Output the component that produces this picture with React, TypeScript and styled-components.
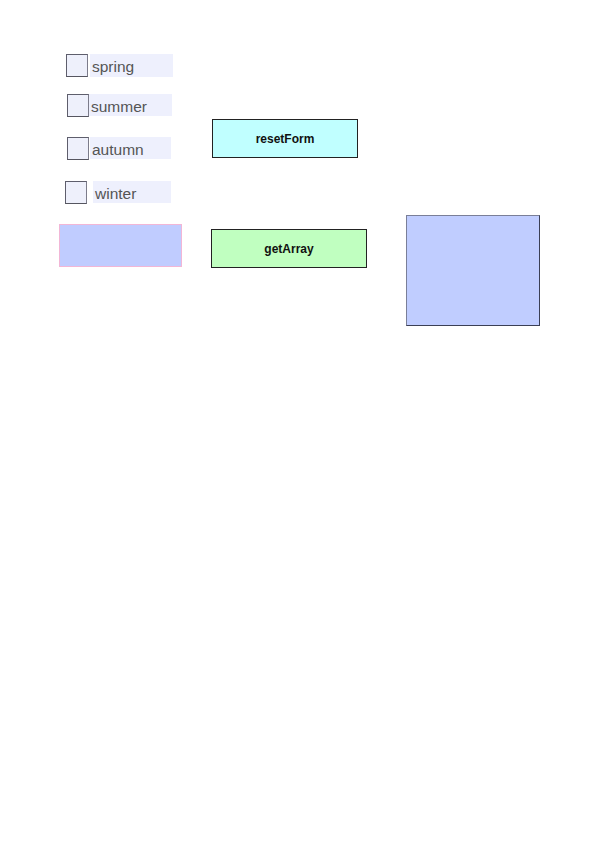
import React from "react";
import styled, { createGlobalStyle } from "styled-components";

const Global = createGlobalStyle`
body{
    margin:0;
    background:#fff;
    font-family:"Liberation Sans",Arial,sans-serif;
}
`
const Canvas = styled.div`
display:flex;
align-items:flex-start;
width:595px;
height:842px;
background:#fff;
`
const Column = styled.div<{ left: number; width: number }>`
display:flex;
flex-direction:column;
align-items:flex-start;
margin-left:${p => p.left}px;
width:${p => p.width}px;
`
const Row = styled.label<{ top: number; indent: number }>`
display:flex;
align-items:flex-start;
margin-top:${p => p.top}px;
padding-left:${p => p.indent}px;
height:23px;
cursor:pointer;
`
const Box = styled.span`
display:block;
width:22px;
height:23px;
box-sizing:border-box;
border:1px solid #5e5e6c;
border-right-color:#7c7c8a;
border-bottom-color:#55555f;
background:#eef0fb;
`
const Label = styled.span<{ gap: number; w: number; h: number; pad: number }>`
display:flex;
align-items:center;
margin-left:${p => p.gap}px;
width:${p => p.w}px;
height:${p => p.h}px;
padding:${p => p.pad}px 0 0 2px;
box-sizing:border-box;
background:#eef0fd;
color:#555;
font-size:15.5px;
`
const Slot = styled.div<{ top: number }>`
margin-top:${p => p.top}px;
width:123px;
height:43px;
box-sizing:border-box;
background:#c0ccff;
border:1px solid #f2b6d6;
`
const Button = styled.button<{ top: number; indent: number; w: number; fill: string }>`
display:flex;
align-items:center;
justify-content:center;
margin-top:${p => p.top}px;
margin-left:${p => p.indent}px;
width:${p => p.w}px;
height:39px;
padding:0;
box-sizing:border-box;
background:${p => p.fill};
border:1px solid #222;
font-family:"Liberation Sans",Arial,sans-serif;
font-weight:bold;
font-size:12px;
color:#111;
cursor:pointer;
`
const Panel = styled.div`
margin-top:215px;
width:134px;
height:111px;
box-sizing:border-box;
background:#c0cdff;
border:1px solid #7a7f98;
border-right-color:#3b3f55;
border-bottom-color:#3b3f55;
`

const seasons = [
    { name: "spring", top: 54, indent: 7, gap: 2, w: 83, h: 23, pad: 2 },
    { name: "summer", top: 17, indent: 8, gap: 0, w: 83, h: 22, pad: 4 },
    { name: "autumn", top: 20, indent: 8, gap: 1, w: 81, h: 22, pad: 4 },
    { name: "winter", top: 21, indent: 6, gap: 6, w: 78, h: 22, pad: 4 },
]

export default function App() {
    return (
        <>
            <Global />
            <Canvas>
                <Column left={59} width={123}>
                    {seasons.map(s =>
                        <Row key={s.name} top={s.top} indent={s.indent}>
                            <Box />
                            <Label gap={s.gap} w={s.w} h={s.h} pad={s.pad}>{s.name}</Label>
                        </Row>
                    )}
                    <Slot top={20} />
                </Column>
                <Column left={29} width={156}>
                    <Button top={119} indent={1} w={146} fill="#c0ffff">resetForm</Button>
                    <Button top={71} indent={0} w={156} fill="#c0ffc0">getArray</Button>
                </Column>
                <Column left={39} width={134}>
                    <Panel />
                </Column>
            </Canvas>
        </>
    )
}
